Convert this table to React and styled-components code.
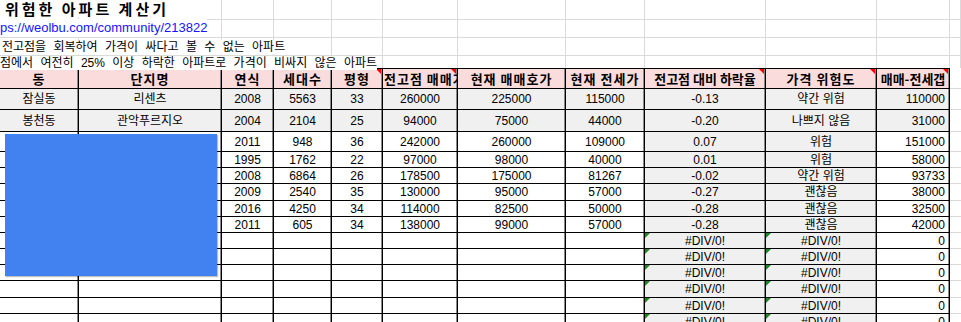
import React from 'react';
import styled, { createGlobalStyle } from 'styled-components';

const GlobalStyle = createGlobalStyle`
  body {
    margin: 0;
    background: #fff;
    overflow: hidden;
  }
`;

const COLS = '79px 143px 52px 58px 51px 75px 108px 79px 121px 111px 73px 11px';

const Sheet = styled.div`
  position: relative;
  width: 961px;
  font-family: "Liberation Sans", "Noto Sans CJK KR", sans-serif;
  color: #000;
`;

const Row = styled.div`
  display: grid;
  grid-template-columns: ${COLS};
  height: ${p => p.$h}px;
`;

// light excel gridline cell used above the table
const GridCell = styled.div`
  box-sizing: border-box;
  border-right: 1px solid #dadada;
  border-bottom: 1px solid #dadada;
  white-space: nowrap;
  overflow: visible;
`;

const Spill = styled.span`
  position: relative;
  z-index: 1;
  display: inline-block;
  background: #fff;
  white-space: nowrap;
`;

const Title = styled(Spill)`
  margin-left: 5px;
  font-family: "Noto Sans CJK KR", sans-serif;
  font-size: 15px;
  font-weight: 700;
  letter-spacing: 3px;
  line-height: 17px;
`;

const LinkText = styled(Spill)`
  font-size: 13px;
  line-height: 18px;
  color: #1515ff;
`;

const Note = styled(Spill)`
  margin-left: ${p => p.$indent || 0}px;
  font-size: 12px;
  line-height: 14px;
  word-spacing: 4px;
`;

const Cell = styled.div`
  position: relative;
  box-sizing: border-box;
  display: flex;
  align-items: center;
  justify-content: ${p => (p.$right ? 'flex-end' : 'safe center')};
  padding: 0 ${p => (p.$right ? 4 : 2)}px 0 2px;
  overflow: hidden;
  white-space: nowrap;
  font-size: 12px;
  line-height: 1;
  background: ${p => p.$bg || '#fff'};
  border-right: 1px solid #000;
  border-bottom: 1px solid #000;
  box-shadow: inset -1px 0 0 #8a8a8a;
`;

const HeadCell = styled(Cell)`
  background: #fbdcdc;
  border-top: 1px solid #000;
  font-family: "Noto Sans CJK KR", sans-serif;
  font-size: 13px;
  font-weight: 700;
  letter-spacing: ${p => p.$tight ? 0 : 1}px;
  padding: 0 1px;
`;

const Margin = styled.div`
  box-sizing: border-box;
  border-bottom: 1px solid #dadada;
  background: #fff;
`;

const CommentMark = styled.i`
  position: absolute;
  top: 0;
  right: 1px;
  width: 0;
  height: 0;
  border-left: 5px solid transparent;
  border-top: 5px solid #f00;
`;

const ErrorMark = styled.i`
  position: absolute;
  top: 0;
  left: 0;
  width: 0;
  height: 0;
  border-right: 5px solid transparent;
  border-top: 5px solid #1c8a1c;
`;

const Redact = styled.div`
  position: absolute;
  left: 5px;
  top: 134px;
  width: 212px;
  height: 142px;
  background: #4282f0;
  box-shadow: 1px 1px 1px rgba(0, 0, 0, 0.25);
  z-index: 2;
`;

const GRAY = '#f0f0f0';

const headers = [
  { t: '동' },
  { t: '단지명' },
  { t: '연식' },
  { t: '세대수' },
  { t: '평형', c: true },
  { t: '전고점 매매가', c: true },
  { t: '현재 매매호가' },
  { t: '현재 전세가' },
  { t: '전고점 대비 하락율', c: true, tight: true },
  { t: '가격 위험도', c: true },
  { t: '매매-전세갭', c: true, tight: true },
];

const rows = [
  ['잠실동', '리센츠', '2008', '5563', '33', '260000', '225000', '115000', '-0.13', '약간 위험', '110000'],
  ['봉천동', '관악푸르지오', '2004', '2104', '25', '94000', '75000', '44000', '-0.20', '나쁘지 않음', '31000'],
  ['', '', '2011', '948', '36', '242000', '260000', '109000', '0.07', '위험', '151000'],
  ['', '', '1995', '1762', '22', '97000', '98000', '40000', '0.01', '위험', '58000'],
  ['', '', '2008', '6864', '26', '178500', '175000', '81267', '-0.02', '약간 위험', '93733'],
  ['', '', '2009', '2540', '35', '130000', '95000', '57000', '-0.27', '괜찮음', '38000'],
  ['', '', '2016', '4250', '34', '114000', '82500', '50000', '-0.28', '괜찮음', '32500'],
  ['', '', '2011', '605', '34', '138000', '99000', '57000', '-0.28', '괜찮음', '42000'],
];
const rowHeights = [21, 22, 20, 16, 16, 17, 16, 16];
const emptyHeights = [16, 16, 16, 17, 16, 16];

const top = [
  { h: 18, node: <Title>위험한 아파트 계산기</Title> },
  { h: 19, node: <LinkText>ps://weolbu.com/community/213822</LinkText> },
  { h: 16, node: <Note $indent={2}>전고점을 회복하여 가격이 싸다고 볼 수 없는 아파트</Note> },
  { h: 15, node: <Note>점에서 여전히 25% 이상 하락한 아파트로 가격이 비싸지 않은 아파트</Note> },
];

const App = () => (
  <>
    <GlobalStyle />
    <Sheet>
      {top.map((r, i) => (
        <Row key={i} $h={r.h}>
          <GridCell>{r.node}</GridCell>
          {Array.from({ length: 11 }).map((_, j) => <GridCell key={j} />)}
        </Row>
      ))}

      <Row $h={21}>
        {headers.map((h, i) => (
          <HeadCell key={i} $tight={h.tight}>
            {h.t}
            {h.c && <CommentMark />}
          </HeadCell>
        ))}
        <Margin />
      </Row>

      {rows.map((r, i) => (
        <Row key={i} $h={rowHeights[i]}>
          {r.map((v, j) => (
            <Cell key={j} $right={j === 10} $bg={i < 2 || j === 8 || j === 9 ? GRAY : undefined}>
              {v}
            </Cell>
          ))}
          <Margin />
        </Row>
      ))}

      {emptyHeights.map((h, i) => (
        <Row key={i} $h={h}>
          {Array.from({ length: 8 }).map((_, j) => <Cell key={j} />)}
          <Cell $bg={GRAY}><ErrorMark />#DIV/0!</Cell>
          <Cell $bg={GRAY}><ErrorMark />#DIV/0!</Cell>
          <Cell $right>0</Cell>
          <Margin />
        </Row>
      ))}

      <Redact />
    </Sheet>
  </>
);

export default App;
